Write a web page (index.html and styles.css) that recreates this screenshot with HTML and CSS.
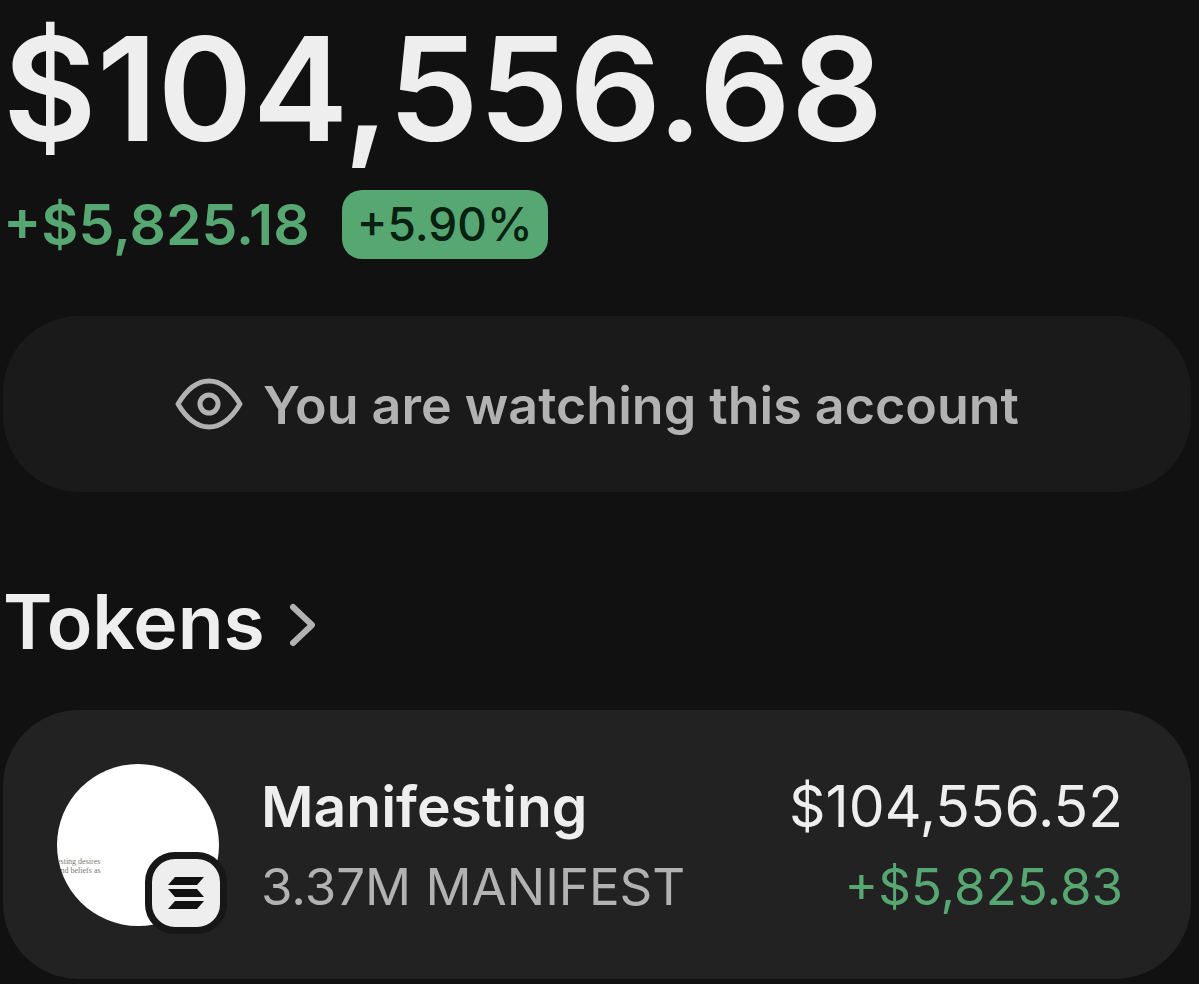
FILE: index.html
```
<!DOCTYPE html>
<html lang="en">

<head>
    <meta charset="UTF-8">
    <meta name="viewport" content="width=device-width, initial-scale=1.0">
    <title>Wallet</title>
    <link rel="stylesheet" href="styles.css">
</head>

<body>
    <main class="wallet">
        <h1 class="balance">$104,556.68</h1>

        <div class="change-row">
            <span class="change-amount">+$5,825.18</span>
            <span class="change-badge">+5.90%</span>
        </div>

        <div class="watch-banner">
            <svg class="eye-icon" viewBox="0 0 68 52" fill="none" stroke="currentColor" stroke-width="5" aria-hidden="true">
                <path d="M3 26C12 11 22 3 34 3s22 8 31 23c-9 15-19 23-31 23S12 41 3 26z" stroke-linejoin="round" />
                <circle cx="34" cy="26" r="9" />
            </svg>
            <span>You are watching this account</span>
        </div>

        <h2 class="section-title">
            <a href="#tokens">
                Tokens
                <svg class="chevron-icon" viewBox="0 0 26 44" fill="none" stroke="currentColor" stroke-width="6" stroke-linecap="round" stroke-linejoin="round" aria-hidden="true">
                    <path d="M4 4l19 18L4 40" />
                </svg>
            </a>
        </h2>

        <div class="token-card" id="tokens">
            <div class="token-avatar">
                <div class="token-image">
                    <span>esting desires</span>
                    <span>and beliefs as</span>
                </div>
                <div class="chain-badge">
                    <svg viewBox="0 0 36 32" fill="currentColor" aria-label="Solana">
                        <path d="M7 0h29l-7 8H0z" />
                        <path d="M0 12h29l7 8H7z" />
                        <path d="M7 24h29l-7 8H0z" />
                    </svg>
                </div>
            </div>
            <div class="token-info">
                <div class="token-name">Manifesting</div>
                <div class="token-amount">3.37M MANIFEST</div>
            </div>
            <div class="token-values">
                <div class="token-price">$104,556.52</div>
                <div class="token-change">+$5,825.83</div>
            </div>
        </div>
    </main>
</body>

</html>
```
FILE: styles.css
```
* {
    margin: 0;
    padding: 0;
    box-sizing: border-box;
}

body {
    font-family: 'Inter', sans-serif;
    background: #111111;
    color: #eeeeee;
    min-height: 100vh;
}

.wallet {
    padding: 17px 8px 5px 3px;
}

.balance {
    font-size: 144px;
    line-height: 144px;
    font-weight: 600;
}

.change-row {
    display: flex;
    align-items: center;
    gap: 32px;
    margin-top: 29px;
}

.change-amount {
    color: #57a773;
    font-size: 57px;
    line-height: 68px;
    font-weight: 600;
}

.change-badge {
    background: #57a773;
    color: #07200f;
    font-size: 46px;
    line-height: 69px;
    font-weight: 500;
    padding: 0 15px;
    border-radius: 20px;
}

.watch-banner {
    display: flex;
    align-items: center;
    justify-content: center;
    gap: 20px;
    margin-top: 57px;
    padding: 54px 20px 50px;
    background: #1a1a1a;
    border-radius: 76px;
    color: #b2b2b2;
    font-size: 52px;
    line-height: 72px;
    font-weight: 600;
}

.eye-icon {
    width: 68px;
    height: 52px;
    margin-bottom: 4px;
}

.section-title {
    margin-top: 86px;
    font-size: 75px;
    line-height: 88px;
    font-weight: 600;
}

.section-title a {
    display: inline-flex;
    align-items: center;
    gap: 24px;
    color: inherit;
    text-decoration: none;
}

.chevron-icon {
    width: 26px;
    height: 44px;
    margin-top: 6px;
    color: #b2b2b2;
}

.token-card {
    display: flex;
    align-items: center;
    margin-top: 44px;
    padding: 53px 68px 52px 54px;
    background: #222222;
    border-radius: 76px;
}

.token-avatar {
    position: relative;
    flex-shrink: 0;
    width: 162px;
    height: 162px;
    margin-right: 42px;
}

.token-image {
    height: 100%;
    padding-top: 93px;
    overflow: hidden;
    background: #ffffff;
    border-radius: 50%;
    color: #777777;
    font-family: 'Liberation Serif', serif;
    font-size: 8px;
    line-height: 9px;
}

.token-image span {
    display: block;
    white-space: nowrap;
}

/* chain logo sits over the corner of the token image */
.chain-badge {
    position: absolute;
    right: -8px;
    bottom: -8px;
    display: flex;
    align-items: center;
    justify-content: center;
    width: 82px;
    height: 82px;
    background: #eeeeee;
    border: 7px solid #171717;
    border-radius: 30px;
    color: #111111;
}

.chain-badge svg {
    width: 36px;
    height: 32px;
}

.token-info,
.token-values {
    padding-top: 4px;
}

.token-info {
    flex: 1;
}

.token-values {
    text-align: right;
}

.token-name,
.token-price {
    font-size: 57px;
    line-height: 80px;
}

.token-name {
    font-weight: 600;
}

.token-amount,
.token-change {
    font-size: 51px;
    line-height: 80px;
}

.token-amount {
    color: #b2b2b2;
}

.token-change {
    color: #57a773;
}
```
